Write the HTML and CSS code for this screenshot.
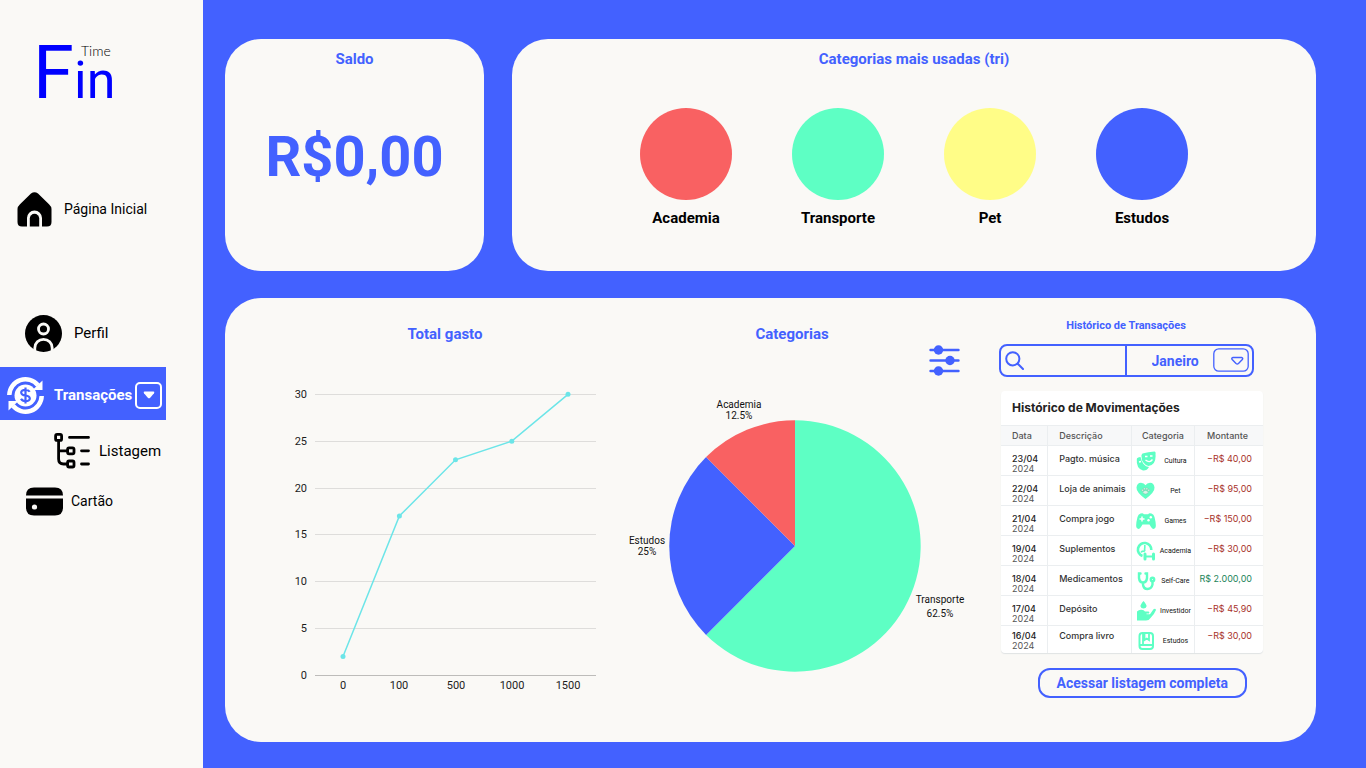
FILE: index.html
```html
<!DOCTYPE html>
<html lang="pt-BR">
<head>
<meta charset="utf-8">
<meta name="viewport" content="width=device-width, initial-scale=1">
<title>FinTime</title>
<link rel="stylesheet" href="styles.css">
</head>
<body class="app">
<aside class="sidebar">
  <svg class="logo" viewBox="0 0 84 64" role="img" aria-label="FinTime">
    <text class="logo-cap" x="0" y="59">F</text>
    <text class="logo-low" x="41" y="59">in</text>
    <text class="logo-time" x="48" y="17">Time</text>
  </svg>
  <nav>
    <ul class="nav">
      <li class="nav-item nav-home">
        <a class="nav-link" href="#inicio">
          <svg class="icon-home" viewBox="0 0 35 35"><path d="M14 1.600Q17.500-1 21 1.600L32 12.200Q34.500 14.500 34.500 17V30Q34.500 34.500 30 34.500H25V26a7.500 7.500 0 0 0-15 0v8.500H5Q.5 34.500.5 30V17Q.5 14.500 3 12.200Z"/><path d="M12.800 34.500V26.500a4.700 4.700 0 0 1 9.400 0v8Z"/></svg>
          Página Inicial
        </a>
      </li>
      <li class="nav-item nav-profile">
        <a class="nav-link" href="#perfil">
          <svg class="icon-profile" viewBox="0 0 37 37"><circle cx="18.500" cy="18.500" r="18.500"/><circle cx="18.500" cy="14" r="5" fill="none" stroke="#faf9f6" stroke-width="2.800"/><path d="M9.800 36V33a8.700 8.700 0 0 1 17.400 0v3" fill="none" stroke="#faf9f6" stroke-width="2.800"/></svg>
          Perfil
        </a>
      </li>
      <li class="nav-item nav-active">
        <a class="nav-link" href="#transacoes">
          <svg class="icon-cycle" viewBox="0 0 37 37"><g fill="none" stroke="#fff" stroke-width="4.500"><path d="M2.300 18A16.200 16.200 0 0 1 31 8.200"/><path d="M34.700 19A16.200 16.200 0 0 1 6 28.800"/></g><path d="M35.500 3.500V13H25.500Z" fill="#fff"/><path d="M1.500 33.500V24H11.500Z" fill="#fff"/><circle cx="18.500" cy="18.500" r="11" fill="#fff"/><path d="M22.700 14.800Q21.500 12.800 18.500 12.800C12.500 12.800 13 18 18.500 18.500S24.500 24.200 18.500 24.200Q15.200 24.200 14 21.800M18.500 10.500v16" fill="none" stroke="#4361ff" stroke-width="2.200"/></svg>
          Transações
        </a>
        <button class="nav-toggle" type="button" aria-label="Abrir submenu">
          <svg viewBox="0 0 12 8"><path d="M1.500.5h9Q12 .8 11 2.200L7.200 6.700Q6 7.800 4.800 6.700L1 2.200Q0 .8 1.500.5Z" fill="#fff"/></svg>
        </button>
      </li>
      <li class="nav-item nav-sub">
        <a class="nav-link" href="#listagem">
          <svg class="icon-tree" viewBox="0 0 37 38" fill="none" stroke="#000" stroke-width="2.800" stroke-linecap="round"><rect x="1.600" y="2.400" width="6" height="6" rx="1.500"/><rect x="13.600" y="15.800" width="6.400" height="6" rx="1.500"/><rect x="13.600" y="29" width="6.400" height="6" rx="1.500"/><path d="M4.600 8.500V27Q4.600 32 9.600 32H13M4.600 18.800H13M15.500 5.400h19M27.500 18.800h7M27.500 32h7"/></svg>
          Listagem
        </a>
      </li>
      <li class="nav-item nav-card">
        <a class="nav-link" href="#cartao">
          <svg class="icon-card" viewBox="0 0 37 29"><path d="M0 8.500Q0 .5 8 .5H29Q37 .5 37 8.500ZM0 11.500H37V20.500Q37 28.500 29 28.500H8Q0 28.500 0 20.500Z"/><circle cx="8.500" cy="20" r="2.600" fill="#faf9f6"/></svg>
          Cartão
        </a>
      </li>
    </ul>
  </nav>
</aside>

<main class="dashboard">
  <section class="panel balance">
    <h2 class="heading">Saldo</h2>
    <p class="balance-value">R$0,00</p>
  </section>

  <section class="panel top-categories">
    <h2 class="heading">Categorias mais usadas (tri)</h2>
    <ul class="bubbles">
      <li class="bubble"><span class="dot dot-red"></span>Academia</li>
      <li class="bubble"><span class="dot dot-green"></span>Transporte</li>
      <li class="bubble"><span class="dot dot-yellow"></span>Pet</li>
      <li class="bubble"><span class="dot dot-blue"></span>Estudos</li>
    </ul>
  </section>

  <section class="panel overview">
    <div class="spent">
      <h2 class="heading">Total gasto</h2>
      <svg class="line-chart" viewBox="0 0 310 320" role="img" aria-label="Total gasto">
        <g stroke="#dedddb"><path d="M25 14.500H306M25 61.500H306M25 108.500H306M25 154.500H306M25 201.500H306M25 248.500H306"/><path d="M25 295.500H306" stroke="#bdbcba"/></g>
        <g class="axis axis-y"><text x="17" y="18">30</text><text x="17" y="65">25</text><text x="17" y="112">20</text><text x="17" y="158">15</text><text x="17" y="205">10</text><text x="17" y="252">5</text><text x="17" y="299">0</text></g>
        <g class="axis axis-x"><text x="53" y="309">0</text><text x="109" y="309">100</text><text x="166" y="309">500</text><text x="222" y="309">1000</text><text x="278" y="309">1500</text></g>
        <polyline points="53,276.500 109.400,136 165.500,79.800 221.800,61.200 278,14.300" fill="none" stroke="#6ce5e8" stroke-width="1.500"/>
        <g fill="#6ce5e8"><circle cx="53" cy="276.500" r="2.500"/><circle cx="109.400" cy="136" r="2.500"/><circle cx="165.500" cy="79.800" r="2.500"/><circle cx="221.800" cy="61.200" r="2.500"/><circle cx="278" cy="14.300" r="2.500"/></g>
      </svg>
    </div>

    <div class="categories">
      <h2 class="heading">Categorias</h2>
      <button class="filter" type="button" aria-label="Filtrar categorias">
        <svg viewBox="0 0 31 31"><path d="M1.500 5H29.500M1.500 15.500H29.500M1.500 26H29.500" stroke="#4361ff" stroke-width="2.400" stroke-linecap="round"/><g fill="#4361ff"><circle cx="9.500" cy="5" r="4.700"/><circle cx="21" cy="15.500" r="4.700"/><circle cx="9.500" cy="26" r="4.700"/></g></svg>
      </button>
      <svg class="pie-chart" viewBox="0 0 344 280" role="img" aria-label="Categorias">
        <path d="M175 150V24.300A125.700 125.700 0 1 1 86.100 238.900Z" fill="#5effc4"/>
        <path d="M175 150L86.100 238.900A125.700 125.700 0 0 1 86.100 61.100Z" fill="#4361ff"/>
        <path d="M175 150L86.100 61.100A125.700 125.700 0 0 1 175 24.300Z" fill="#f96162"/>
        <g class="pie-label"><text x="119" y="12">Academia</text><text x="119" y="23">12.5%</text><text x="27" y="148">Estudos</text><text x="27" y="159">25%</text><text x="320" y="207">Transporte</text><text x="320" y="221">62.5%</text></g>
      </svg>
    </div>

    <div class="history">
      <h2 class="heading heading-small">Histórico de Transações</h2>
      <form class="search">
        <label class="search-field">
          <svg class="search-icon" viewBox="0 0 19 19" fill="none" stroke="#4361ff" stroke-width="2" stroke-linecap="round"><circle cx="7.800" cy="7.800" r="6.600"/><path d="M12.800 12.800L18 18"/></svg>
          <input class="search-input" type="search" aria-label="Buscar">
        </label>
        <div class="month">
          <select class="month-select" aria-label="Mês"><option>Janeiro</option></select>
          <svg class="month-arrow" viewBox="0 0 36 24" fill="none" stroke="#4361ff"><rect x=".8" y=".8" width="34.400" height="22.400" rx="5" stroke-width="1.300"/><path d="M20 9.500H28.500Q30.500 9.800 29.300 11.500L25.500 15.500Q24.300 16.500 23 15.500L19.200 11.500Q18 9.800 20 9.500Z" stroke-width="1.400"/></svg>
        </div>
      </form>
      <div class="movements">
        <h3 class="movements-title">Histórico de Movimentações</h3>
        <table class="table">
          <colgroup><col class="col-date"><col class="col-desc"><col class="col-cat"><col class="col-amount"></colgroup>
          <thead><tr><th>Data</th><th>Descrição</th><th class="head-cat">Categoria</th><th class="head-amount">Montante</th></tr></thead>
          <tbody>
            <tr><td><b>23/04</b>2024</td><td class="desc">Pagto. música</td><td><span class="cat"><svg viewBox="0 0 20 20"><path d="M6.500 2.500Q12 .8 18.500.5Q20 .8 19.500 3Q20.500 14 12.500 15Q5 13 5.500 4Z" fill="#5effc4"/><path d="M4.500 6Q1 6.500.8 8Q0 17.500 7 19.500Q11 19.800 13 16Q6.500 15.500 4.500 6Z" fill="#5effc4"/><path d="M9 5.500h2.500M14 5h2.500M9.500 9Q13.500 12.500 16.500 8.500M3 11l2-.5" fill="none" stroke="#fff" stroke-width="1.300"/></svg><span>Cultura</span></span></td><td class="amount debit">−R$ 40,00</td></tr>
            <tr><td><b>22/04</b>2024</td><td class="desc">Loja de animais</td><td><span class="cat"><svg viewBox="0 0 20 20"><path d="M9.500 18Q0 11 .5 6.500Q1 2 5 1.800Q8 1.800 9.500 4.300Q11 1.800 14 1.800Q18 2 18.500 6.500Q19 11 9.500 18Z" fill="#5effc4"/><g fill="#d8f5e9" stroke="#7fb5a0" stroke-width=".4"><ellipse cx="9.500" cy="11.300" rx="2.500" ry="1.800"/><circle cx="6.500" cy="9.300" r="1"/><circle cx="8.500" cy="7.800" r="1"/><circle cx="10.800" cy="7.800" r="1"/><circle cx="12.700" cy="9.300" r="1"/></g></svg><span>Pet</span></span></td><td class="amount debit">−R$ 95,00</td></tr>
            <tr><td><b>21/04</b>2024</td><td class="desc">Compra jogo</td><td><span class="cat"><svg viewBox="0 0 20 20"><path d="M4.500 2.500Q7 1.500 7.800 3.200H12.200Q13 1.500 15.500 2.500Q17.800 3 18.500 6Q20.500 14 19.500 16.500Q17.500 19.500 15 16L13.500 13.500H6.500L5 16Q2.500 19.500.5 16.500Q-.5 14 1.500 6Q2.200 3 4.500 2.500Z" fill="#5effc4"/><path d="M6 5.500v5M3.500 8h5" stroke="#fff" stroke-width="1.500"/><g fill="#fff"><circle cx="14.800" cy="6.300" r="1.200"/><circle cx="12.500" cy="9.300" r="1.200"/></g></svg><span>Games</span></span></td><td class="amount debit">−R$ 150,00</td></tr>
            <tr><td><b>19/04</b>2024</td><td class="desc">Suplementos</td><td><span class="cat"><svg viewBox="0 0 20 20" fill="none" stroke="#5effc4"><path d="M6.500 15A6.700 6.700 0 1 1 15.300 9" stroke-width="2.600"/><path d="M5 11.500Q6 9.500 8.800 10.500M8.800 4v3Q8 9 9.500 9.500" stroke-width="1.600"/><path d="M9 15.500H18" stroke-width="2"/><path d="M9 13v5M17.500 13v5" stroke-width="3" stroke-linecap="round"/></svg><span>Academia</span></span></td><td class="amount debit">−R$ 30,00</td></tr>
            <tr><td><b>18/04</b>2024</td><td class="desc">Medicamentos</td><td><span class="cat"><svg viewBox="0 0 20 20" fill="none" stroke="#5effc4" stroke-width="2.400" stroke-linecap="round"><path d="M4.500 2.500H3V7Q3.500 11.500 7 11.500T11 7V2.500H9.500M7 12V13.500Q7.500 18 11.500 18T16.500 13.500V11"/><circle cx="16.500" cy="8.500" r="1.700"/></svg><span>Self-Care</span></span></td><td class="amount credit">R$ 2.000,00</td></tr>
            <tr><td><b>17/04</b>2024</td><td class="desc">Depósito</td><td><span class="cat"><svg viewBox="0 0 20 20" fill="#5effc4"><path d="M7.500 0Q11 4 10.500 5.500Q10 7.500 7.500 7.500T4.500 5.500Q4 4 7.500 0Z"/><path d="M1 10.500Q3 8.500 5.500 8.800Q8 9 9 10.500H12.500Q14 11 13 12.500H10.500V13.300H14L17.500 8.300Q19.500 7 20 9Q18.500 13 14.500 17Q13 19.500 10 19.500H1Z"/></svg><span>Investidor</span></span></td><td class="amount debit">−R$ 45,90</td></tr>
            <tr><td><b>16/04</b>2024</td><td class="desc">Compra livro</td><td><span class="cat"><svg viewBox="0 0 20 20" fill="none" stroke="#5effc4" stroke-width="2"><rect x="3.500" y="2" width="13.500" height="16" rx="3"/><path d="M3.500 14H17M7 2V13.500M8.500 3V9L10.800 7.500L13 9V3" stroke-width="1.800"/></svg><span>Estudos</span></span></td><td class="amount debit">−R$ 30,00</td></tr>
          </tbody>
        </table>
      </div>
      <button class="full-list" type="button">Acessar listagem completa</button>
    </div>
  </section>
</main>
</body>
</html>
```
FILE: styles.css
```css
:root {
  --blue: #4361ff;
  --paper: #faf9f6;
}

* { box-sizing: border-box; }

h2, h3, p, ul { margin: 0; padding: 0; }
ul { list-style: none; }
svg { display: block; flex: none; }
button, input, select { font: inherit; color: inherit; margin: 0; }
button { cursor: pointer; }

.app {
  margin: 0;
  min-height: 100vh;
  display: flex;
  background: var(--blue);
  font-family: Roboto, "Liberation Sans", sans-serif;
  color: #000;
}

.sidebar {
  width: 203px;
  flex: none;
  padding-top: 39px;
  background: var(--paper);
}

.logo { width: 84px; height: 64px; margin-left: 33px; overflow: visible; }
.logo-cap { font-size: 74px; fill: #00f; }
.logo-low { font-size: 52px; fill: #00f; }
.logo-time { font: 300 14px Lato, sans-serif; fill: #000; }

.nav { display: flex; flex-direction: column; padding-top: 86px; }
.nav-item { display: flex; align-items: center; height: 40px; font-size: 15px; }
.nav-link { display: flex; align-items: center; gap: 12px; color: inherit; text-decoration: none; }
.nav-home { padding-left: 17px; margin-bottom: 84px; font-size: 14px; }
.nav-profile { padding-left: 25px; margin-bottom: 14px; }
.nav-active {
  width: 166px;
  height: 53px;
  padding: 3px 4px 0 7px;
  justify-content: space-between;
  background: var(--blue);
  color: #fff;
  font-weight: 700;
}
.nav-active .nav-link { gap: 10px; }
.nav-toggle {
  width: 27px;
  height: 27px;
  display: grid;
  place-items: center;
  padding: 0;
  background: none;
  border: 2px solid #fff;
  border-radius: 5px;
}
.nav-toggle svg { width: 12px; height: 8px; }
.nav-sub { height: 62px; padding-left: 54px; }
.nav-sub .nav-link, .nav-card .nav-link { gap: 8px; }
.nav-card { height: 38px; padding-left: 26px; font-size: 14px; }
.icon-home { width: 35px; height: 35px; }
.icon-profile, .icon-cycle { width: 37px; height: 37px; }
.icon-tree { width: 37px; height: 38px; }
.icon-card { width: 37px; height: 29px; }

.dashboard {
  flex: 1;
  min-width: 0;
  display: grid;
  grid-template-columns: 259fr 804fr;
  grid-template-rows: 232fr 444fr;
  gap: 27px 28px;
  padding: 39px 50px 26px 22px;
}

.panel { background: var(--paper); border-radius: 36px; }
.heading {
  font-size: 15px;
  line-height: 18px;
  font-weight: 700;
  color: var(--blue);
  text-align: center;
}
.heading-small { font-size: 11px; line-height: 14px; }

.balance, .top-categories { padding-top: 11px; }
.balance-value {
  padding-top: 56px;
  font-size: 56px;
  line-height: 66px;
  font-weight: 700;
  color: var(--blue);
  text-align: center;
}

.bubbles { display: flex; justify-content: center; gap: 60px; padding-top: 40px; }
.bubble {
  width: 92px;
  display: flex;
  flex-direction: column;
  align-items: center;
  gap: 9px;
  font-size: 15px;
  line-height: 18px;
  font-weight: 700;
}
.dot { width: 92px; height: 92px; border-radius: 50%; }
.dot-red { background: #f96162; }
.dot-green { background: #5effc4; }
.dot-yellow { background: #fffd87; }
.dot-blue { background: var(--blue); }

.overview {
  grid-column: 1 / -1;
  display: grid;
  grid-template-columns: 310fr 344fr 279fr;
  gap: 20px;
  align-items: start;
  padding: 20px 53px 40px 65px;
}

.spent, .categories { padding-top: 7px; }
.line-chart { width: 100%; height: auto; margin-top: 37px; }
.axis { font-size: 11px; fill: #1c1c1c; }
.axis-y { text-anchor: end; }
.axis-x { text-anchor: middle; }

.categories { display: flex; flex-direction: column; }
.filter {
  align-self: flex-end;
  margin: 2px 4px 20px 0;
  padding: 0;
  background: none;
  border: 0;
}
.filter svg { width: 31px; height: 31px; }
.pie-chart { width: 100%; height: auto; overflow: visible; }
.pie-label { font-size: 10px; text-anchor: middle; fill: #111; }

.history { padding: 1px 0 0 15px; display: flex; flex-direction: column; }
.history .heading { margin-right: 10px; }

.search {
  display: flex;
  height: 33px;
  margin: 11px 9px 14px 0;
  border: 2px solid var(--blue);
  border-radius: 8px;
  color: var(--blue);
}
.search-field {
  width: 50%;
  display: flex;
  align-items: center;
  gap: 4px;
  padding-left: 4px;
  border-right: 2px solid var(--blue);
}
.search-icon { width: 19px; height: 19px; }
.search-input {
  flex: 1 1 0;
  min-width: 0;
  padding: 0;
  border: 0;
  outline: 0;
  background: none;
  font-size: 14px;
}
.month { position: relative; width: 50%; display: flex; }
.month-select {
  width: 100%;
  appearance: none;
  padding: 0 0 0 25px;
  border: 0;
  background: none;
  font-size: 14px;
  font-weight: 700;
}
.month-arrow {
  position: absolute;
  top: 2px;
  right: 3px;
  width: 36px;
  height: 24px;
  pointer-events: none;
}

.movements {
  margin-left: 2px;
  background: #fff;
  border-radius: 4px;
  box-shadow: 0 1px 1px #dfe3e4;
  overflow: hidden;
  font-family: Inter, "Liberation Sans", sans-serif;
  color: #222;
}
.movements-title { padding: 9px 11px; font-size: 12px; line-height: 16px; font-weight: 700; }

.table { width: 100%; table-layout: fixed; border-collapse: separate; border-spacing: 0; }
.col-date { width: 18%; }
.col-desc { width: 32%; }
.col-cat { width: 24%; }
.col-amount { width: 26%; }
.table th {
  height: 21px;
  padding: 0 11px;
  background: #f7f8f9;
  border: solid #ebeef0;
  border-width: 1px 1px 1px 0;
  font-size: 9px;
  font-weight: 500;
  line-height: 10px;
  text-align: left;
  color: #555;
}
.table td {
  height: 30px;
  padding: 8px 0 0 11px;
  border: solid #ebeef0;
  border-width: 0 1px 1px 0;
  font-size: 9px;
  line-height: 10px;
  vertical-align: top;
  color: #555;
}
.table tr > :last-child { border-right: 0; }
.table tbody tr:last-child td { height: 27px; padding-top: 5px; border-bottom: 0; }
.table b { display: block; font-weight: 500; color: #222; }
.table td.desc { font-weight: 500; color: #333; }
.table td:nth-child(3) { padding: 5px 1px 0 4px; }
.table th.head-cat { padding: 0; text-align: center; }
.table th.head-amount { padding: 0 15px 0 0; text-align: right; }
.table td.amount { padding-right: 11px; padding-left: 0; text-align: right; white-space: nowrap; }
.table td.debit { color: #a8322a; }
.table td.credit { color: #23855a; }
.cat { display: flex; align-items: center; }
.cat svg { width: 20px; height: 20px; }
.cat span { flex: 1; padding-left: 2px; text-align: center; font: 7px/8px Roboto, sans-serif; color: #111; }

.full-list {
  align-self: flex-end;
  margin: 15px 16px 0 0;
  height: 30px;
  padding: 0 17px;
  background: none;
  border: 2px solid var(--blue);
  border-radius: 12px;
  font-size: 14px;
  font-weight: 700;
  color: var(--blue);
  white-space: nowrap;
}
```
